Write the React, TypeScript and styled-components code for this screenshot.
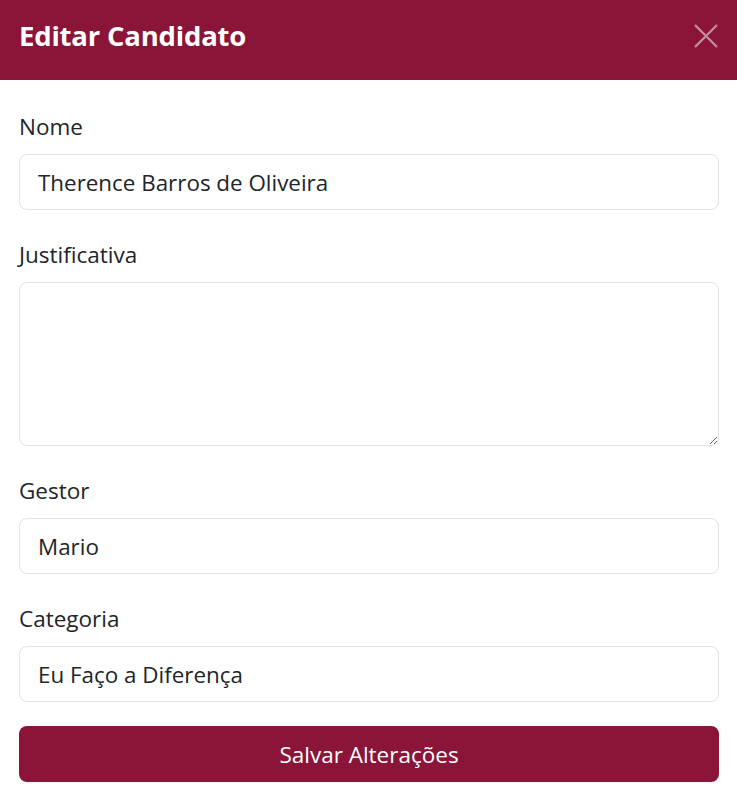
import React from "react";
import styled, { createGlobalStyle } from "styled-components";

const Global = createGlobalStyle`
  html, body { margin: 0; padding: 0; background: #fff; }
  body { font-family: "Open Sans", "Noto Sans", sans-serif; color: #212529; }
  * { box-sizing: border-box; }
`;

const Modal = styled.div`
  width: 737px;
  background: #fff;
`;

const Header = styled.header`
  height: 80px;
  background: #8b1538;
  display: flex;
  align-items: center;
  justify-content: space-between;
  padding: 0 18px 8px 19px;
`;

const Title = styled.h1`
  margin: 0;
  font-size: 27.5px;
  font-weight: 700;
  color: #fff;
  line-height: 1;
  letter-spacing: -0.2px;
`;

const CloseButton = styled.button`
  background: none;
  border: 0;
  padding: 0;
  width: 26px;
  height: 26px;
  display: flex;
  align-items: center;
  justify-content: center;
  cursor: pointer;
  opacity: 0.5;
`;

const Body = styled.form`
  padding: 32px 18px 12px 19px;
  display: flex;
  flex-direction: column;
`;

const Fields = styled.div`
  display: flex;
  flex-direction: column;
  gap: 30px;
`;

const Field = styled.div`
  display: flex;
  flex-direction: column;
`;

const Label = styled.label`
  font-size: 22.5px;
  line-height: 30px;
  margin-bottom: 12px;
  color: #212529;
`;

const Input = styled.input`
  height: 56px;
  width: 100%;
  border: 1px solid #dee2e6;
  border-radius: 8px;
  padding: 0 18px;
  font-family: inherit;
  font-size: 22.4px;
  color: #212529;
  background: #fff;
  outline: none;
`;

const TextArea = styled.textarea`
  height: 164px;
  width: 100%;
  border: 1px solid #dee2e6;
  border-radius: 8px;
  padding: 12px 18px;
  font-family: inherit;
  font-size: 22.4px;
  color: #212529;
  background: #fff;
  resize: vertical;
  outline: none;
`;

const SubmitButton = styled.button`
  margin-top: 24px;
  height: 56px;
  width: 100%;
  border: 0;
  border-radius: 8px;
  background: #8b1538;
  color: #fff;
  font-family: inherit;
  font-size: 22.5px;
  cursor: pointer;
`;

export default function App() {
  return (
    <>
      <Global />
      <Modal>
        <Header>
          <Title>Editar Candidato</Title>
          <CloseButton type="button" aria-label="Fechar">
            <svg width="24" height="24" viewBox="0 0 24 24">
              <path d="M1 1 L23 23 M23 1 L1 23" stroke="#fff" strokeWidth="2.4" fill="none" />
            </svg>
          </CloseButton>
        </Header>
        <Body onSubmit={(e) => e.preventDefault()}>
          <Fields>
            <Field>
              <Label htmlFor="nome">Nome</Label>
              <Input id="nome" defaultValue="Therence Barros de Oliveira" />
            </Field>
            <Field>
              <Label htmlFor="just">Justificativa</Label>
              <TextArea id="just" />
            </Field>
            <Field>
              <Label htmlFor="gestor">Gestor</Label>
              <Input id="gestor" defaultValue="Mario" />
            </Field>
            <Field>
              <Label htmlFor="cat">Categoria</Label>
              <Input id="cat" defaultValue="Eu Faço a Diferença" />
            </Field>
          </Fields>
          <SubmitButton type="submit">Salvar Alterações</SubmitButton>
        </Body>
      </Modal>
    </>
  );
}
